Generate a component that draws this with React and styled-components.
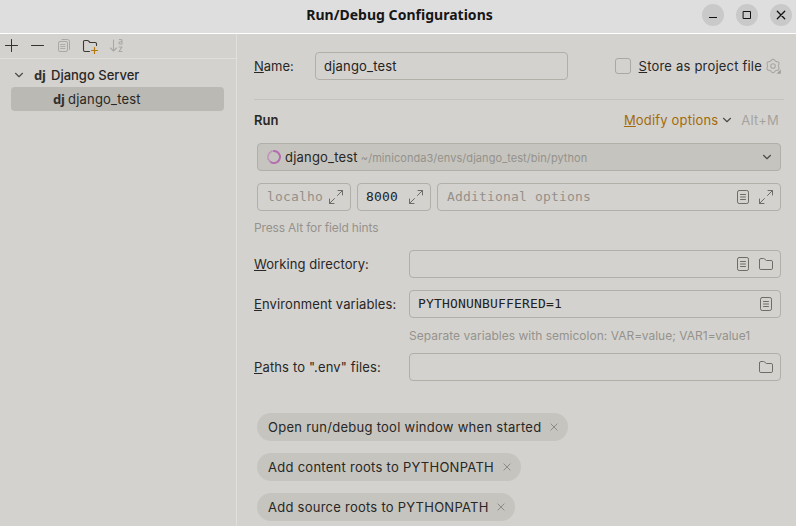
import React from "react";
import styled, { createGlobalStyle } from "styled-components";

const Global = createGlobalStyle`
  * { box-sizing: border-box; }
  html, body { margin: 0; padding: 0; overflow: hidden; background: #d4d2ce; }
  body { font: 13px/16px Inter, "Liberation Sans", sans-serif; color: #282725; }
  svg { display: block; flex: none; fill: none; overflow: visible; }
`;

const Window = styled.div`
  width: 796px; height: 526px; overflow: hidden;
  display: flex; flex-direction: column; background: #d4d2ce;
`;
const TitleBar = styled.header`
  flex: none; height: 34px; background: #dedede; border-bottom: 1px solid #fff;
  display: grid; grid-template-columns: 1fr auto 1fr; align-items: center;
  padding: 0 4px 3px 7px;
`;
const Title = styled.h1`
  grid-column: 2; margin: 0; color: #161616; white-space: nowrap;
  font: 700 14px/20px "Noto Sans", "Open Sans", sans-serif;
  letter-spacing: 0.02px;
`;
const WindowButtons = styled.div`display: flex; justify-content: flex-end; gap: 12px;`;
const RoundButton = styled.div`
  width: 22px; height: 22px; border-radius: 50%; background: #c9c9c9;
  display: flex; align-items: center; justify-content: center;
`;
const Body = styled.div`flex: 1; min-height: 0; display: flex;`;
const Sidebar = styled.aside`width: 237px; border-right: 1px solid #e0dfdc;`;
const Toolbar = styled.div`
  height: 25px; border-bottom: 1px solid #e0dfdc;
  display: flex; align-items: center; gap: 10px; padding: 0 0 1px 3px;
`;
const Tree = styled.div`padding: 4px 12px 0 11px;`;
const TreeRow = styled.div`
  height: 24px; border-radius: 4px; display: flex; align-items: center;
  padding-left: ${(p) => p.$indent}px;
  background: ${(p) => (p.$selected ? "#bab9b3" : "transparent")};
`;
const DjangoMark = styled.span`
  font: 700 13px/16px "Noto Sans", sans-serif; color: #302f2d; flex: none;
  width: ${(p) => p.$width}px; margin-left: ${(p) => p.$gap || 0}px; letter-spacing: -0.3px;
`;
const Text = styled.span`
  white-space: nowrap; letter-spacing: ${(p) => p.$track || 0}px;
  font-weight: ${(p) => p.$weight || 400};
  color: ${(p) => p.$color || "#282725"};
`;
const Mnemonic = styled.span`
  text-decoration: underline 1px; text-underline-offset: 1px; text-decoration-skip-ink: none;
`;
const Main = styled.main`flex: 1; padding: 18px 12px 0 17px;`;
const NameRow = styled.div`
  display: grid; grid-template-columns: 61px 253px 1fr; align-items: center; height: 28px;
`;
const StoreOption = styled.div`display: flex; align-items: center; justify-content: flex-end; padding-right: 3px;`;
const StoreLabel = styled.span`margin-right: 3px; display: flex;`;
const Checkbox = styled.span`
  width: 16px; height: 16px; border: 1px solid #aaa8a3; border-radius: 3px; margin-right: 8px;
`;
const Rule = styled.hr`margin: 19px 0 0; border: 0; height: 1px; background: #c3c1bc;`;
const SectionHead = styled.div`
  height: 43px; display: flex; align-items: center; padding: 0 5px 3px 0;
`;
const ModifyLink = styled.span`
  margin-left: auto; display: flex; align-items: center; gap: 1px; margin-right: 6px;
`;
const Indented = styled.div`margin: 0 3px;`;
const Field = styled.div`
  height: 28px; min-width: 0; border: 1px solid #b1afa8; border-radius: 4px;
  display: flex; align-items: center; gap: ${(p) => p.$gap || 7}px;
  padding: 0 ${(p) => p.$end || 6}px 0 ${(p) => p.$start || 8}px;
  background: ${(p) => (p.$filled ? "#c6c4be" : "transparent")};
`;
const FieldValue = styled.span`
  flex: 1; min-width: 0; white-space: nowrap;
  font: 13px/18px ${(p) => (p.$ui ? "Inter, sans-serif" : '"DejaVu Sans Mono", monospace')};
  letter-spacing: ${(p) => (p.$ui ? p.$ui : 0.174)}px;
  color: ${(p) => (p.$muted ? "#94908a" : "#23221f")};
`;
const FieldGroup = styled.div`
  display: grid; grid-template-columns: 94px 74px 1fr; gap: 6px; margin-top: 12px;
`;
const Hint = styled.div`
  height: 16px; color: #94928d; font-size: 12px; white-space: nowrap;
  margin: ${(p) => p.$margin}; letter-spacing: ${(p) => p.$track}px;
`;
const InterpreterPath = styled.span`
  margin-right: auto; color: #94928d; font-size: 11px; white-space: nowrap;
  letter-spacing: 0.06px; padding-top: 2px;
`;
const FormRow = styled.div`
  height: 28px; display: grid; grid-template-columns: 155px 1fr; align-items: center;
  margin: 0 3px ${(p) => p.$below}px 0;
`;
const Chips = styled.div`
  display: flex; flex-direction: column; align-items: flex-start; gap: 12px; padding-left: 3px;
`;
const Chip = styled.div`
  height: 28px; width: ${(p) => p.$width}px; border-radius: 14px; background: #c6c4be;
  display: flex; align-items: center; justify-content: space-between; padding: 0 10px 0 11px;
`;

const Icon = ({ size = 16, color = "#6f6c65", children }) => (
  <svg width={size} height={size} viewBox={`0 0 ${size} ${size}`} stroke={color} strokeLinecap="round" strokeLinejoin="round">
    {children}
  </svg>
);
const Chevron = () => (
  <Icon color="#4e4c48"><path d="M4.5 6.3 8 9.7l3.5-3.4" strokeWidth="1.2" /></Icon>
);
const ExpandIcon = () => (
  <Icon><path d="M9.5 6.5 14.5 1.5M10 1.5h4.5V6M6.5 9.5l-5 5M1.5 10v4.5H6" /></Icon>
);
const ListIcon = () => (
  <Icon><rect x="2.5" y="1.5" width="11" height="13" rx="1.7" /><path d="M5.5 5.5h5M5.5 8h5M5.5 10.5h5" /></Icon>
);
const FolderIcon = () => (
  <Icon><path d="M1.5 4v8.2q0 1.3 1.3 1.3h10.4q1.3 0 1.3-1.3V5.8q0-1.3-1.3-1.3H8.4L6.3 2.8q-.4-.3-.9-.3H2.8Q1.5 2.5 1.5 4Z" /></Icon>
);
const CloseIcon = () => <Icon size={8} color="#8d8b85"><path d="M.9.9l6.2 6.2M7.1.9.9 7.1" /></Icon>;

// Six-toothed outline: the radius swells once per tooth, starting at the top.
const gearOutline = Array.from({ length: 72 }, (_, i) => {
  const a = (i * Math.PI) / 36;
  const r = 6.05 + 0.65 * Math.cos(6 * a);
  return `${(8 + r * Math.sin(a)).toFixed(2)},${(8 - r * Math.cos(a)).toFixed(2)}`;
}).join(" ");
const GearIcon = () => (
  <Icon color="#a9a7a2">
    <polygon points={gearOutline} strokeWidth="1.1" />
    <circle cx="8" cy="8" r="2.3" strokeWidth="1.1" />
    <path d="M15.8 11.5v4.3h-4.3Z" fill="#a09e98" stroke="none" />
  </Icon>
);
const SpinnerIcon = () => (
  <Icon>
    <circle cx="8" cy="8" r="6" stroke="#c08abd" strokeWidth="1.8" strokeDasharray="1.7 .5" strokeLinecap="butt" />
    <path d="M8 2a6 6 0 1 1-3 11.2" stroke="#b36cb0" strokeWidth="1.8" />
  </Icon>
);

const Label = ({ text, ...rest }) => (
  <Text {...rest}><Mnemonic>{text[0]}</Mnemonic>{text.slice(1)}</Text>
);

const chips = [
  { text: "Open run/debug tool window when started", width: 311, track: 0.27 },
  { text: "Add content roots to PYTHONPATH", width: 264, track: 0.27 },
  { text: "Add source roots to PYTHONPATH", width: 258, track: 0.25 },
];

export default function App() {
  return (
    <Window>
      <Global />
      <TitleBar>
        <Title>Run/Debug Configurations</Title>
        <WindowButtons>
          <RoundButton><Icon size={8} color="#111"><path d="M0 6.5h8" strokeLinecap="butt" /></Icon></RoundButton>
          <RoundButton><Icon size={8} color="#111"><path d="M.5.5h7v7h-7Z" /></Icon></RoundButton>
          <RoundButton><Icon size={8} color="#111"><path d="M.3.3l7.4 7.4M7.7.3.3 7.7" strokeWidth="1.3" /></Icon></RoundButton>
        </WindowButtons>
      </TitleBar>
      <Body>
        <Sidebar>
          <Toolbar>
            <Icon color="#33322f"><path d="M2.5 7.5h12M8.5 1.5v12" /></Icon>
            <Icon color="#33322f"><path d="M2.5 7.5h12" /></Icon>
            <Icon color="#aaa8a3">
              <path d="M7 1.5h5.5q2 0 2 2v8" />
              <rect x="3.5" y="3.5" width="9" height="10" rx="1.5" />
              <path d="M5.5 6.5h4.5M5.5 8.5h4.5M5.5 10.5h4.5" strokeWidth=".9" />
            </Icon>
            <Icon color="#3c3a37">
              <path d="M8.5 13.5H4q-1.5 0-1.5-1.5V3.7q0-1.2 1.3-1.2h2.7q.5 0 .9.4L9 4.5h5.2q1.3 0 1.3 1.3V7.5" strokeWidth="1.1" />
              <path d="M13.5 9.5v6M10.5 12.5h6" stroke="#b6780d" strokeWidth="1.2" />
            </Icon>
            <Icon color="#aaa8a3">
              <path d="M6.5 2v11M3.5 10l3 3 3-3M12.3 1.5h1.7q1 0 1 1v3.5h-1.8q-1.3 0-1.3-1.1t1.3-1.1H15M12 9h3l-3 4.5h3" strokeWidth="1.1" />
            </Icon>
          </Toolbar>
          <Tree>
            <TreeRow $indent={0}>
              <Chevron />
              <DjangoMark $gap={7} $width={17}>dj</DjangoMark>
              <Text $weight={500}>Django Server</Text>
            </TreeRow>
            <TreeRow $indent={42} $selected>
              <DjangoMark $width={15}>dj</DjangoMark>
              <Text $track={0.2}>django_test</Text>
            </TreeRow>
          </Tree>
        </Sidebar>
        <Main>
          <NameRow>
            <Label text="Name:" />
            <Field><FieldValue $ui={0.2}>django_test</FieldValue></Field>
            <StoreOption>
              <Checkbox />
              <StoreLabel><Label text="Store as project file" $track={0.2} /></StoreLabel>
              <GearIcon />
            </StoreOption>
          </NameRow>
          <Rule />
          <SectionHead>
            <Text $weight={600}>Run</Text>
            <ModifyLink>
              <Label text="Modify options" $color="#a36a0b" $track={0.18} />
              <Chevron />
            </ModifyLink>
            <Text $color="#a5a39e" $track={0.2}>Alt+M</Text>
          </SectionHead>
          <Indented>
            <Field $filled $end={5} $gap={3}>
              <SpinnerIcon />
              <Text $track={0.2}>django_test</Text>
              <InterpreterPath>~/miniconda3/envs/django_test/bin/python</InterpreterPath>
              <Chevron />
            </Field>
            <FieldGroup>
              <Field $start={9} $gap={4}><FieldValue $muted>localho</FieldValue><ExpandIcon /></Field>
              <Field><FieldValue>8000</FieldValue><ExpandIcon /></Field>
              <Field $start={9}><FieldValue $muted>Additional options</FieldValue><ListIcon /><ExpandIcon /></Field>
            </FieldGroup>
          </Indented>
          <Hint $margin="9px 0 14px" $track={-0.15}>Press Alt for field hints</Hint>
          <FormRow $below={12}>
            <Label text="Working directory:" $track={0.08} />
            <Field><FieldValue /><ListIcon /><FolderIcon /></Field>
          </FormRow>
          <FormRow $below={10}>
            <Label text="Environment variables:" $track={0.11} />
            <Field><FieldValue>PYTHONUNBUFFERED=1</FieldValue><ListIcon /></Field>
          </FormRow>
          <Hint $margin="0 0 9px 155px" $track={0.02}>Separate variables with semicolon: VAR=value; VAR1=value1</Hint>
          <FormRow $below={32}>
            <Label text={'Paths to ".env" files:'} $track={0.14} />
            <Field><FieldValue /><FolderIcon /></Field>
          </FormRow>
          <Chips>
            {chips.map((chip) => (
              <Chip key={chip.text} $width={chip.width}>
                <Text $track={chip.track}>{chip.text}</Text>
                <CloseIcon />
              </Chip>
            ))}
          </Chips>
        </Main>
      </Body>
    </Window>
  );
}
